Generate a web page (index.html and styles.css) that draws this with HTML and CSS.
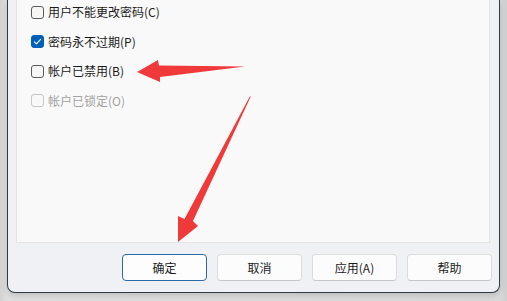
FILE: index.html
```html
<!DOCTYPE html>
<html lang="zh-CN">
<head>
<meta charset="utf-8">
<title>属性</title>
<link rel="stylesheet" href="styles.css">
</head>
<body>
<div class="window">
  <div class="panel">
    <label class="row"><span class="box"></span><span class="label">用户不能更改密码(C)</span></label>
    <label class="row"><span class="box checked"><svg viewBox="0 0 13 13" width="13" height="13"><path d="M3.4 6.8 L5.5 8.8 L9.6 4.4" fill="none" stroke="#fff" stroke-width="1.1" stroke-linecap="round" stroke-linejoin="round"/></svg></span><span class="label">密码永不过期(P)</span></label>
    <label class="row"><span class="box"></span><span class="label">帐户已禁用(B)</span></label>
    <label class="row disabled"><span class="box"></span><span class="label">帐户已锁定(O)</span></label>
  </div>
  <div class="footer">
    <button class="btn default">确定</button>
    <button class="btn">取消</button>
    <button class="btn">应用(A)</button>
    <button class="btn">帮助</button>
  </div>
</div>
<svg class="arrows" width="507" height="301" viewBox="0 0 507 301">
  <polygon fill="#f03a3a" points="137,72 158,60 159,65.5 245,66.5 160,77 160,82"/>
  <polygon fill="#f03a3a" points="251,96 193,221 198,226 178,242 178,216 184.5,219 249.5,97"/>
</svg>
</body>
</html>
```

FILE: styles.css
```css
html, body {
  margin: 0;
  padding: 0;
}
body {
  width: 507px;
  height: 301px;
  overflow: hidden;
  background: linear-gradient(90deg, #d2d2d2 0, #dedede 7px, #d8d8d8 500px, #cfcfcf 507px);
  font-family: "Noto Sans CJK SC", "Noto Sans", sans-serif;
  font-size: 12px;
  color: #1b1b1b;
  position: relative;
}
.window {
  margin-left: 7px;
  width: 491px;
  height: 292px;
  background: #eff1f4;
  border: 1px solid #2d3b44;
  border-top: none;
  border-radius: 0 0 8px 8px;
  display: flex;
  flex-direction: column;
  box-shadow: 0 2px 6px rgba(0,0,0,0.15);
}
.panel {
  margin-left: 8px;
  margin-top: -3px;
  width: 472px;
  height: 245px;
  background: #f9f9f9;
  border: 1px solid #e4e4e4;
  border-top: none;
  display: flex;
  flex-direction: column;
}
.row {
  height: 29.5px;
  display: flex;
  align-items: center;
  padding-left: 14px;
  flex: none;
}
.row:first-child {
  margin-top: 0.5px;
}
.box {
  width: 11px;
  height: 11px;
  border: 1px solid #5b5b5b;
  border-radius: 3px;
  background: #f6f6f6;
  margin-right: 4px;
  flex: none;
  position: relative;
}
.box.checked {
  background: #005fb8;
  border-color: #005fb8;
}
.box svg {
  position: absolute;
  left: -1px;
  top: -1px;
}
.label {
  line-height: 16px;
}
.row.disabled .box {
  border-color: #c6c6c6;
  background: #f9f9f9;
}
.row.disabled .label {
  color: #a2a2a2;
}
.footer {
  display: flex;
  justify-content: flex-end;
  gap: 10px;
  padding-right: 7px;
  margin-top: 11px;
}
.btn {
  width: 85px;
  height: 27px;
  box-sizing: border-box;
  border: 1px solid #dcdcdc;
  border-bottom-color: #c6c6c6;
  border-radius: 4px;
  background: #fcfcfc;
  font-family: "Noto Sans CJK SC", "Noto Sans", sans-serif;
  font-size: 12px;
  color: #1b1b1b;
  padding: 0;
}
.btn.default {
  border: 1px solid #2c6aa5;
  background: #fdfdfd;
}
.arrows {
  position: absolute;
  left: 0;
  top: 0;
  pointer-events: none;
}
```
